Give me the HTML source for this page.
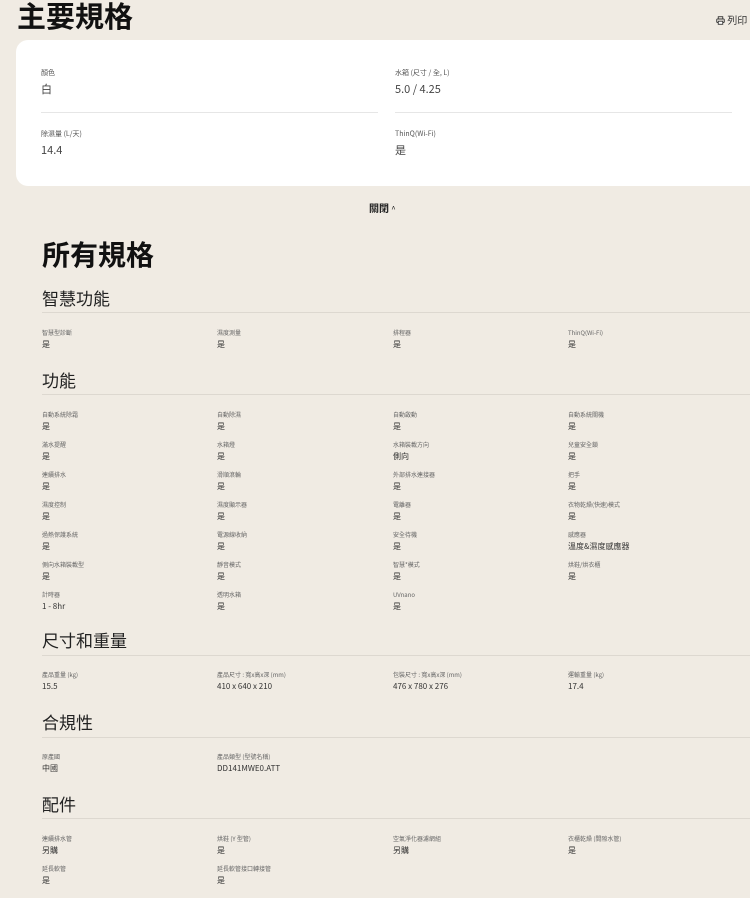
<!DOCTYPE html>
<html><head><meta charset="utf-8"><style>
*{margin:0;padding:0;box-sizing:border-box}
body{width:750px;height:898px;overflow:hidden;background:#f0ebe3;font-family:"Noto Sans CJK TC",sans-serif;color:#222;position:relative}
.a{position:absolute;white-space:nowrap;line-height:1.2;margin-top:2px}
.h1{font-size:29px;font-weight:700;color:#111}
.card{position:absolute;left:16px;top:40px;width:745px;height:146px;background:#fff;border-radius:12px}
.kl{font-size:7px;color:#555}
.kv{font-size:11px;color:#444}
.ln{position:absolute;height:1px;background:#e6e6e6}
.sh{font-size:17px;color:#222}
.sl{position:absolute;left:42px;width:708px;height:1px;background:#ddd8d0}
.l{font-size:6px;color:#666}
.v{font-size:8px;color:#333}
</style></head><body>
<div class="a h1" style="left:17px;top:-4px">主要規格</div>
<div class="a" style="left:716px;top:12px;font-size:10px;color:#333"><svg width="9" height="9" viewBox="0 0 10 10" style="vertical-align:-1px"><rect x="2.5" y="0.8" width="5" height="2.5" fill="none" stroke="#333" stroke-width="1"/><rect x="0.8" y="3.3" width="8.4" height="4" rx="1" fill="none" stroke="#333" stroke-width="1"/><rect x="2.5" y="5.8" width="5" height="3.4" fill="#fff" stroke="#333" stroke-width="1"/></svg> 列印</div>
<div class="card"></div>
<div class="a kl" style="left:41px;top:67px">顏色</div>
<div class="a kv" style="left:41px;top:81px">白</div>
<div class="a kl" style="left:395px;top:67px">水箱 (尺寸 / 全, L)</div>
<div class="a kv" style="left:395px;top:81px">5.0 / 4.25</div>
<div class="ln" style="left:41px;top:112px;width:337px"></div>
<div class="ln" style="left:395px;top:112px;width:337px"></div>
<div class="a kl" style="left:41px;top:128px">除濕量 (L/天)</div>
<div class="a kv" style="left:41px;top:142px">14.4</div>
<div class="a kl" style="left:395px;top:128px">ThinQ(Wi-Fi)</div>
<div class="a kv" style="left:395px;top:142px">是</div>
<div class="a" style="left:369px;top:200px;font-size:10px;font-weight:700;color:#222">關閉 <span style="font-weight:400;font-size:8px">^</span></div>
<div class="a h1" style="left:42px;top:236px;font-size:28px">所有規格</div>

<div class="a sh" style="left:42px;top:286px">智慧功能</div><div class="sl" style="top:312px"></div>
<div class="a sh" style="left:42px;top:368px">功能</div><div class="sl" style="top:394px"></div>
<div class="a sh" style="left:42px;top:628px">尺寸和重量</div><div class="sl" style="top:655px"></div>
<div class="a sh" style="left:42px;top:710px">合規性</div><div class="sl" style="top:737px"></div>
<div class="a sh" style="left:42px;top:792px">配件</div><div class="sl" style="top:818px"></div>
<script>
var X=[42,217,393,568];
function put(y,items){items.forEach(function(it,i){if(!it)return;var d=document.createElement('div');d.className='a l';d.style.left=X[i]+'px';d.style.top=y+'px';d.textContent=it[0];document.body.appendChild(d);var e=document.createElement('div');e.className='a v';e.style.left=X[i]+'px';e.style.top=(y+11)+'px';e.textContent=it[1];document.body.appendChild(e);});}
put(327,[["智慧型診斷","是"],["濕度測量","是"],["排程器","是"],["ThinQ(Wi-Fi)","是"]]);
var F=[
[["自動系統除霜","是"],["自動除濕","是"],["自動啟動","是"],["自動系統關機","是"]],
[["滿水提醒","是"],["水箱燈","是"],["水箱裝載方向","側向"],["兒童安全鎖","是"]],
[["連續排水","是"],["滑順滾輪","是"],["外部排水連接器","是"],["把手","是"]],
[["濕度控制","是"],["濕度顯示器","是"],["電離器","是"],["衣物乾燥(快速)模式","是"]],
[["過熱保護系統","是"],["電源線收納","是"],["安全待機","是"],["感應器","溫度&濕度感應器"]],
[["側向水箱裝載型","是"],["靜音模式","是"],["智慧*模式","是"],["烘鞋/烘衣櫃","是"]],
[["計時器","1 - 8hr"],["透明水箱","是"],["UVnano","是"],null]];
F.forEach(function(r,i){put(409+i*30,r);});
put(669,[["產品重量 (kg)","15.5"],["產品尺寸 : 寬x高x深 (mm)","410 x 640 x 210"],["包裝尺寸 : 寬x高x深 (mm)","476 x 780 x 276"],["運輸重量 (kg)","17.4"]]);
put(751,[["原產國","中國"],["產品類型 (型號名稱)","DD141MWE0.ATT"]]);
put(833,[["連續排水管","另購"],["烘鞋 (Y 型管)","是"],["空氣淨化器濾網組","另購"],["衣櫃乾燥 (間隙水管)","是"]]);
put(863,[["延長軟管","是"],["延長軟管接口轉接管","是"]]);
</script>
</body></html>
